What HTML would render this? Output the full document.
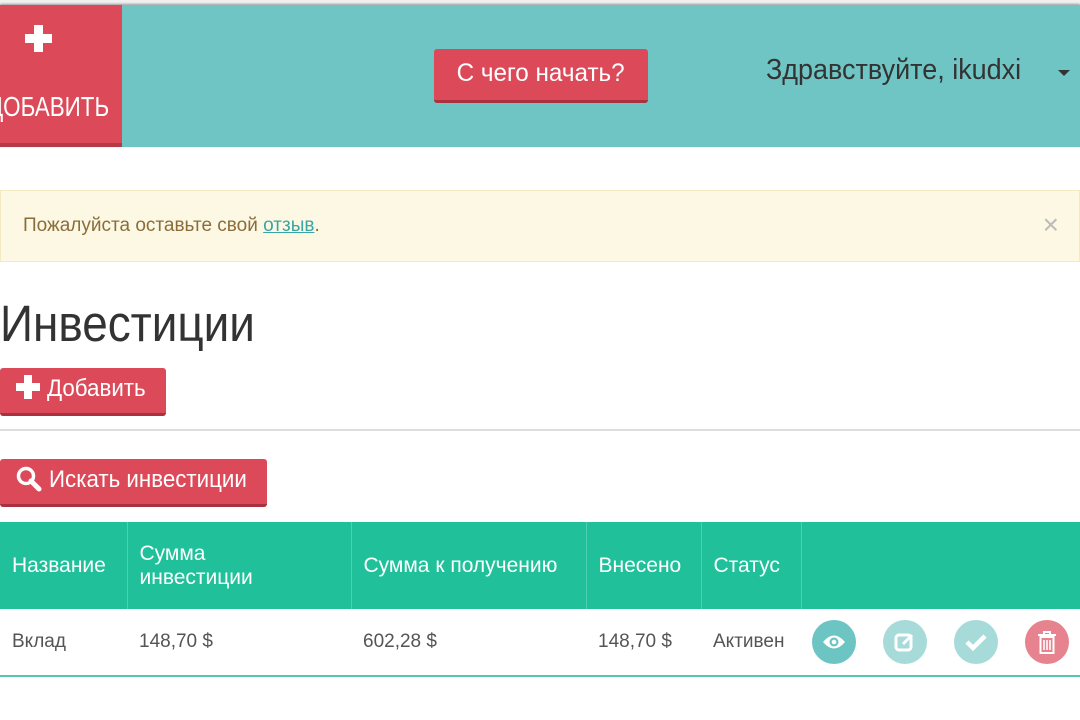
<!DOCTYPE html>
<html><head><meta charset="utf-8"><style>
*{box-sizing:border-box;margin:0;padding:0}
body{width:1080px;height:720px;overflow:hidden;background:#fff;font-family:"Liberation Sans",sans-serif;position:relative;color:#444}
.abs{position:absolute}
.top{left:0;top:0;width:1080px;height:5px;background:#f0f0f0}
.hdr{left:0;top:5px;width:1080px;height:142px;background:#6fc5c4;box-shadow:0 -1px 2px #999}
.red{left:0;top:5px;width:122px;height:142px;background:#dc4a5a;border-bottom:4px solid #b43a48;color:#fff}
.btn{background:#dc4a5a;color:#fff;border-bottom:3px solid #a8323f;border-radius:3px}
.alert{left:0;top:190px;width:1080px;height:72px;background:#fcf8e3;border:1px solid #f5e9c3;color:#8a6d3b;font-size:19px;padding:24px 22px}
.alert a{color:#3aa6a4;text-decoration:underline}
table{position:absolute;left:0;top:522px;width:1080px;border-collapse:collapse;font-size:21px;table-layout:fixed}
th{background:#20c19a;color:#fff;font-weight:normal;text-align:left;padding:0 12px;height:87px;border-right:1px solid #4fd0b0}
td{height:67px;padding:0 12px;color:#555;font-size:19px;border-bottom:2px solid #56c3b5}
.c{width:44px;height:44px;border-radius:50%;display:inline-block;vertical-align:middle;position:relative}
.c svg{position:absolute;left:10px;top:10px}
</style></head><body>
<div class="abs top"></div>
<div class="abs hdr"></div>
<div class="abs red">
 <div class="abs" style="left:25px;top:29px;width:27px;height:9px;background:#fff"></div>
 <div class="abs" style="left:34px;top:20px;width:9px;height:27px;background:#fff"></div>
 <div class="abs" style="left:-12px;top:86px;font-size:28px;white-space:nowrap;transform:scaleX(.8);transform-origin:left">ДОБАВИТЬ</div>
</div>
<div class="abs btn" style="left:434px;top:49px;width:214px;height:54px;font-size:25px;text-align:center;line-height:48px"><span style="display:inline-block;transform:scaleX(.97)">С чего начать?</span></div>
<div class="abs" style="left:766px;top:54px;font-size:29px;color:#333;white-space:nowrap;transform:scaleX(.93);transform-origin:left">Здравствуйте, ikudxi</div>
<div class="abs" style="left:1058px;top:70px;border:6px solid transparent;border-top:6px solid #333"></div>
<div class="abs alert">Пожалуйста оставьте свой <a>отзыв</a>.<span style="position:absolute;right:20px;top:18px;font-size:28px;color:#bbb">×</span></div>
<div class="abs" style="left:0;top:294px;font-size:51px;color:#333;transform:scaleX(.9);transform-origin:left;white-space:nowrap">Инвестиции</div>
<div class="abs btn" style="left:0;top:368px;width:166px;height:48px;font-size:24px;line-height:42px;padding-left:16px;white-space:nowrap">
 <span style="display:inline-block;width:24px;height:24px;position:relative;vertical-align:-3px"><i style="position:absolute;left:0;top:8px;width:24px;height:8px;background:#fff"></i><i style="position:absolute;left:8px;top:0;width:8px;height:24px;background:#fff"></i></span>
 <span style="display:inline-block;transform:scaleX(.93);transform-origin:left">Добавить</span></div>
<div class="abs" style="left:0;top:429px;width:1080px;height:2px;background:#ddd"></div>
<div class="abs btn" style="left:0;top:459px;width:267px;height:48px;font-size:24px;line-height:42px;padding-left:16px;white-space:nowrap">
 <svg width="26" height="26" viewBox="0 0 26 26" style="vertical-align:-5px"><circle cx="10" cy="10" r="7.5" fill="none" stroke="#fff" stroke-width="3.5"/><path d="M15 15l8 8" stroke="#fff" stroke-width="5" stroke-linecap="round"/></svg>
 <span style="display:inline-block;transform:scaleX(.93);transform-origin:left">Искать инвестиции</span></div>
<table><colgroup><col style="width:127px"><col style="width:224px"><col style="width:235px"><col style="width:115px"><col style="width:100px"><col></colgroup>
<tr><th>Название</th><th>Сумма<br>инвестиции</th><th>Сумма к получению</th><th>Внесено</th><th>Статус</th><th style="border-right:0"></th></tr>
<tr><td>Вклад</td><td>148,70 $</td><td>602,28 $</td><td>148,70 $</td><td>Активен</td><td style="padding-left:11px;white-space:nowrap"><span class="c" style="background:#6dc5c3"><svg width="24" height="24" viewBox="0 0 24 24"><path d="M1 12q11-13 22 0q-11 13-22 0z" fill="#fff"/><circle cx="12" cy="12" r="4.5" fill="#6dc5c3"/><circle cx="12" cy="12" r="2.3" fill="#fff"/></svg></span><span class="c" style="background:#a6dbda;margin-left:27px"><svg width="24" height="24" viewBox="0 0 24 24"><rect x="3" y="5" width="15" height="15" rx="3" fill="none" stroke="#fff" stroke-width="3"/><path d="M10 14l9-9" stroke="#fff" stroke-width="3"/></svg></span><span class="c" style="background:#a6dbda;margin-left:27px"><svg width="24" height="24" viewBox="0 0 24 24"><path d="M3 12l6 6 12-12" fill="none" stroke="#fff" stroke-width="4.5"/></svg></span><span class="c" style="background:#e6838e;margin-left:27px"><svg width="24" height="24" viewBox="0 0 24 24"><path d="M3 5h18M9 5V2h6v3M5.5 7h13v16h-13z" fill="none" stroke="#fff" stroke-width="2"/><path d="M9 10v10M12 10v10M15 10v10" stroke="#fff" stroke-width="1.6"/></svg></span></td></tr></table>
</body></html>
